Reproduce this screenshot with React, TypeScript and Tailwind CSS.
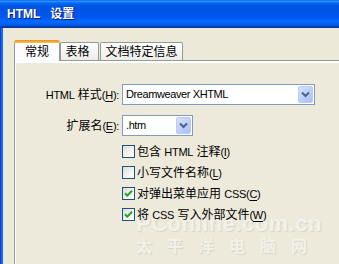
import React from "react";

const U = ({ c }: { c: string }) => <span className="underline underline-offset-[2px]">{c}</span>;
const L = ({ children }: { children: React.ReactNode }) => (
  <span className="text-[11px] tracking-[-0.3px]">{children}</span>
);

function Chevron() {
  return (
    <div className="w-[15px] h-full rounded-[2px] border border-[#B9CBF5] bg-[linear-gradient(135deg,#D6E2FD_0%,#B9CDFB_60%,#A9C0F5_100%)] flex items-center justify-center">
      <svg width="9" height="7" viewBox="0 0 9 7">
        <path d="M1 1.5 L4.5 5 L8 1.5" fill="none" stroke="#4D6185" strokeWidth="2" />
      </svg>
    </div>
  );
}

function Select({ w, text }: { w: string; text: string }) {
  return (
    <div className={`${w} h-[21px] border border-[#7F9DB9] bg-white flex items-stretch p-[1px]`}>
      <div className="flex-1 pl-[2px] flex items-center text-[11px] tracking-[-0.4px] leading-none">{text}</div>
      <Chevron />
    </div>
  );
}

function Check({ checked, children }: { checked: boolean; children: React.ReactNode }) {
  return (
    <div className="relative z-10 h-[21px] flex items-center pl-[107px]">
      <div className="w-[13px] h-[13px] border border-[#1C5180] bg-[linear-gradient(135deg,#DCDCD7_0%,#F2F2EE_55%,#FFFFFF_100%)] flex items-center justify-center shrink-0">
        {checked && (
          <svg width="9" height="9" viewBox="0 0 9 9">
            <path d="M1 4.2 L3.3 6.6 L8 1.8" fill="none" stroke="#21A121" strokeWidth="2" />
          </svg>
        )}
      </div>
      <div className="ml-[2px] text-[12px] leading-none whitespace-nowrap">{children}</div>
    </div>
  );
}

export default function App() {
  return (
    <div className="w-[339px] h-[264px] overflow-hidden relative bg-[#ECE9D8] flex flex-col font-['Liberation_Sans','Noto_Sans_CJK_SC',sans-serif] text-black">
      <div className="h-[28px] shrink-0 bg-[linear-gradient(to_bottom,#0058EE_0%,#3593FF_4%,#288EFF_6%,#127DFF_8%,#036FFC_10%,#0262EE_14%,#0057E5_20%,#0054E3_24%,#0055EB_56%,#005BF5_66%,#026AFE_76%,#0062EF_86%,#0052D6_92%,#0040AB_96%,#003092_100%)] flex items-center pl-[7px] pb-[1px]">
        <span className="text-white font-bold text-[12px] leading-none [text-shadow:1px_1px_0_#0A1883]">
          HTML<span className="ml-[10px]">设置</span>
        </span>
      </div>
      <div className="flex flex-1 min-h-0">
        <div className="w-[3px] shrink-0 bg-[linear-gradient(to_right,#0A3FD0_0%,#0A3FD0_33%,#1D6AF7_34%,#1766F5_100%)]" />
        <div className="flex-1 flex flex-col pl-[11px] pt-[12px] min-w-0">
          <div className="h-[21px] flex items-end shrink-0">
            <div className="relative z-10 w-[46px] h-[21px] border-x border-[#919B9C] rounded-t-[3px] bg-[#FCFCFE] flex flex-col">
              <div className="h-[3px] -mx-px rounded-t-[3px] bg-[linear-gradient(to_bottom,#E68B2C,#FFC73C)]" />
              <div className="flex-1 flex items-start justify-center pt-[3px] text-[12px] leading-none">常规</div>
            </div>
            <div className="w-[39px] h-[19px] border border-b-0 border-[#919B9C] rounded-t-[2px] bg-[linear-gradient(to_bottom,#FFFFFF,#ECEBE6)] flex items-start justify-center pt-[3px] pr-[4px] text-[12px] leading-none">
              表格
            </div>
            <div className="ml-[1px] w-[83px] h-[19px] border border-b-0 border-[#919B9C] rounded-t-[2px] bg-[linear-gradient(to_bottom,#FFFFFF,#ECEBE6)] flex items-start justify-center pt-[3px] text-[12px] leading-none whitespace-nowrap">
              文档特定信息
            </div>
          </div>
          <div className="relative flex-1 -mt-px border-t border-l border-[#919B9C] bg-[#EDEADB] shadow-[inset_1px_2px_0_#FFFFFF] flex flex-col pt-[23px]">
            <div className="absolute left-[121px] top-[152px] pointer-events-none select-none flex flex-col opacity-80">
              <div className="text-[22px] font-bold leading-none text-[#F4F3ED] [text-shadow:1px_1px_1px_#D3D0C2] tracking-[0.5px]">
                PConline.com.cn
              </div>
              <div className="mt-[4px] text-[16px] font-bold leading-none text-[#F4F3ED] [text-shadow:1px_1px_1px_#D3D0C2] tracking-[15px] whitespace-nowrap">
                太平洋电脑网
              </div>
            </div>
            <div className="relative z-10 flex items-center h-[21px]">
              <div className="w-[104px] text-right text-[12px] leading-none whitespace-nowrap">
                <L>HTML</L> 样式<L>(<U c="H" />):</L>
              </div>
              <div className="ml-[3px]">
                <Select w="w-[193px]" text="Dreamweaver XHTML" />
              </div>
            </div>
            <div className="relative z-10 flex items-center h-[21px] mt-[10px]">
              <div className="w-[104px] text-right text-[12px] leading-none whitespace-nowrap">
                扩展名<L>(<U c="E" />):</L>
              </div>
              <div className="ml-[3px]">
                <Select w="w-[71px]" text=".htm" />
              </div>
            </div>
            <div className="mt-[5px] flex flex-col">
              <Check checked={false}>包含 <L>HTML</L> 注释<L>(<U c="I" />)</L></Check>
              <Check checked={false}>小写文件名称<L>(<U c="L" />)</L></Check>
              <Check checked={true}>对弹出菜单应用 <L>CSS(<U c="C" />)</L></Check>
              <Check checked={true}>将 <L>CSS</L> 写入外部文件<L>(<U c="W" />)</L></Check>
            </div>
          </div>
        </div>
      </div>
    </div>
  );
}
